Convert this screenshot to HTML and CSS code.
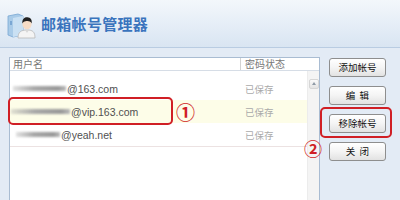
FILE: index.html
```html
<!DOCTYPE html>
<html lang="zh-CN">
<head>
    <meta charset="UTF-8">
    <title>邮箱帐号管理器</title>
    <link rel="stylesheet" href="styles.css">
</head>
<body>
    <div class="header">
        <svg class="logo" width="30" height="28" viewBox="0 0 30 28">
            <!-- 蓝色卡片盒 -->
            <path d="M2 5 L12 3 L17 5 L17 24 L7 26 L2 24 Z" fill="#a9cbe8" stroke="#7aa7d3" stroke-width="0.8"/>
            <path d="M7 7 L17 5 L17 24 L7 26 Z" fill="#c9e0f3"/>
            <rect x="4" y="10" width="2" height="4" fill="#7aa7d3"/>
            <!-- 人物 -->
            <path d="M12 27 C12 21 15 19 21 19 C27 19 29 21 29 27 Z" fill="#f4f4f4" stroke="#b9b9b9" stroke-width="0.8"/>
            <path d="M19 19 L21 22 L23 19 Z" fill="#d8d8d8"/>
            <ellipse cx="21" cy="13" rx="4.6" ry="5.2" fill="#f6dcc6"/>
            <path d="M16.3 12.5 C16 7.5 19 6 21.5 6.3 C24.5 6.6 26.2 8.5 25.7 12.5 C24.5 10 22 9.6 19.5 10.2 C18 10.6 17 11.3 16.3 12.5 Z" fill="#222"/>
        </svg>
        <div class="title">邮箱帐号管理器</div>
    </div>

    <div class="main">
        <div class="list">
            <div class="list-head">
                <div class="col-name">用户名</div>
                <div class="col-state">密码状态</div>
            </div>
            <div class="list-body">
                <div class="rows">
                    <div class="row">
                        <div class="col-name"><span class="blur b1"></span>@163.com</div>
                        <div class="col-state">已保存</div>
                    </div>
                    <div class="row selected">
                        <div class="col-name"><span class="blur b2"></span>@vip.163.com</div>
                        <div class="col-state">已保存</div>
                        <div class="mark-box row-mark"></div>
                        <div class="num row-num">①</div>
                    </div>
                    <div class="row last">
                        <div class="col-name"><span class="blur b3"></span>@yeah.net</div>
                        <div class="col-state">已保存</div>
                    </div>
                </div>
                <div class="scroll">
                    <div class="scroll-up"></div>
                </div>
            </div>
        </div>

        <div class="side">
            <button class="btn">添加帐号</button>
            <button class="btn">编&nbsp;&nbsp;辑</button>
            <button class="btn marked">移除帐号
                <span class="mark-box btn-mark"></span>
                <span class="num btn-num">②</span>
            </button>
            <button class="btn">关&nbsp;&nbsp;闭</button>
        </div>
    </div>
</body>
</html>
```

FILE: styles.css
```css
body {
    margin: 0;
    width: 400px;
    height: 200px;
    overflow: hidden;
    font-family: "Liberation Sans", "Noto Sans CJK SC", sans-serif;
    background: #e3ebf5;
}
.header {
    height: 47px;
    border-bottom: 1px solid #b9cce2;
    background: linear-gradient(#f3f7fb 0%, #e6eef7 50%, #d9e5f2 100%);
    display: flex;
    align-items: center;
    padding-left: 6px;
}
.logo {
    margin-top: 2px;
}
.title {
    margin-left: 5px;
    font-family: "Noto Sans CJK SC", sans-serif;
    font-size: 15px;
    font-weight: bold;
    letter-spacing: 0.3px;
    color: #3a74bd;
}
.main {
    display: flex;
    height: 152px;
    padding-top: 9px;
    box-sizing: border-box;
}
.list {
    width: 311px;
    margin-left: 9px;
    box-sizing: border-box;
    background: #fff;
    border: 1px solid #a9bcd2;
    border-bottom: none;
    display: flex;
    flex-direction: column;
}
.list-head {
    display: flex;
    height: 12px;
    border-bottom: 1px solid #d6dde6;
    font-family: "Noto Sans CJK SC", sans-serif;
    font-size: 10px;
    line-height: 12px;
    color: #777;
}
.col-name {
    width: 230px;
    padding-left: 3px;
    box-sizing: border-box;
    display: flex;
    align-items: center;
}
.list-head .col-state {
    border-left: 1px solid #d3d3d3;
    padding-left: 4px;
}
.list-body {
    flex: 1;
    display: flex;
}
.rows {
    flex: 1;
    padding-top: 6px;
}
.row {
    position: relative;
    display: flex;
    align-items: center;
    height: 23px;
    font-size: 10.5px;
    color: #505050;
}
.row.selected {
    background: #fdfde8;
}
.row.last {
    border-bottom: 1px solid #ece2e2;
}
.row .col-state {
    padding-left: 5px;
    font-family: "Noto Sans CJK SC", sans-serif;
    font-size: 9.5px;
    color: #aaa;
}
.blur {
    display: inline-block;
    height: 5px;
    background: linear-gradient(to right, rgba(160,160,160,0.3), #a8a8a8 40%, #999 85%, #bbb);
    filter: blur(1px);
    margin-right: 1px;
}
.b1 { width: 53px; margin-left: 0; }
.b2 { width: 59px; margin-left: -2px; }
.b3 { width: 44px; margin-left: 3px; }
.scroll {
    width: 12px;
    background: #f4f4f4;
    border-left: 1px solid #ececec;
    padding-top: 8px;
    box-sizing: border-box;
}
.scroll-up {
    width: 10px;
    height: 10px;
    margin-left: 1px;
    box-sizing: border-box;
    border: 1px solid #d6d6d6;
    border-radius: 2px;
    background: linear-gradient(#fafafa, #e3e3e3);
    position: relative;
}
.scroll-up::after {
    content: "";
    position: absolute;
    left: 1.5px;
    top: 2px;
    border-left: 2.5px solid transparent;
    border-right: 2.5px solid transparent;
    border-bottom: 3px solid #8f9aa6;
}
.side {
    flex: 1;
    padding: 1px 0 0 9px;
    display: flex;
    flex-direction: column;
    align-items: flex-start;
}
.btn {
    position: relative;
    width: 57px;
    height: 19px;
    margin-bottom: 9px;
    padding: 0;
    border: 1px solid #8e8e8e;
    border-radius: 3px;
    background: linear-gradient(#ffffff 0%, #f4f4f4 50%, #e2e2e2 100%);
    font-family: "Noto Sans CJK SC", sans-serif;
    font-size: 9.5px;
    color: #111;
    line-height: 17px;
}
.mark-box {
    position: absolute;
    border: 2px solid #d01f25;
    border-radius: 5px;
    box-sizing: border-box;
}
.row-mark {
    left: -2px;
    top: -3px;
    width: 165px;
    height: 28px;
}
.num {
    position: absolute;
    font-family: "Noto Sans CJK SC", sans-serif;
    font-size: 19px;
    font-weight: bold;
    line-height: 19px;
    color: #d01f25;
}
.row-num {
    left: 166px;
    top: 2px;
}
.btn-mark {
    left: -10px;
    top: -8px;
    width: 72px;
    height: 31px;
}
.btn-num {
    left: -26px;
    top: 24px;
    font-size: 18px;
    line-height: 18px;
}
```
